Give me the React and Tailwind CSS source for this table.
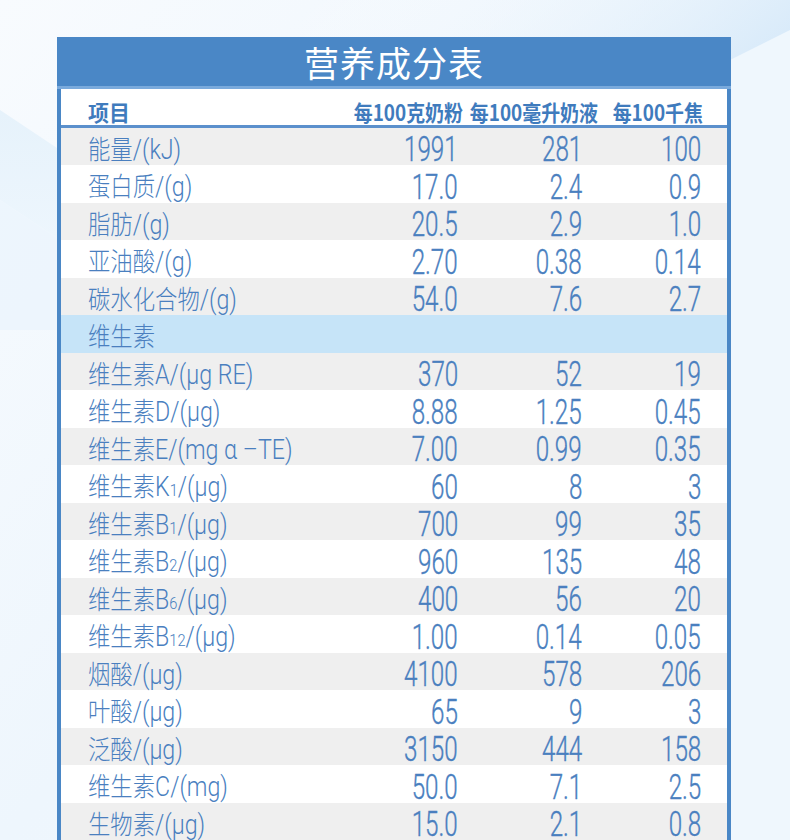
import React from "react";

const rows = [
  { c: "能量", u: "/(kJ)", v: ["1991", "281", "100"] },
  { c: "蛋白质", u: "/(g)", v: ["17.0", "2.4", "0.9"] },
  { c: "脂肪", u: "/(g)", v: ["20.5", "2.9", "1.0"] },
  { c: "亚油酸", u: "/(g)", v: ["2.70", "0.38", "0.14"] },
  { c: "碳水化合物", u: "/(g)", v: ["54.0", "7.6", "2.7"] },
  { c: "维生素", section: true },
  { c: "维生素", u: "A/(μg RE)", v: ["370", "52", "19"] },
  { c: "维生素", u: "D/(μg)", v: ["8.88", "1.25", "0.45"] },
  { c: "维生素", u: "E/(mg α –TE)", v: ["7.00", "0.99", "0.35"] },
  { c: "维生素", u: "K", s: "1", r: "/(μg)", v: ["60", "8", "3"] },
  { c: "维生素", u: "B", s: "1", r: "/(μg)", v: ["700", "99", "35"] },
  { c: "维生素", u: "B", s: "2", r: "/(μg)", v: ["960", "135", "48"] },
  { c: "维生素", u: "B", s: "6", r: "/(μg)", v: ["400", "56", "20"] },
  { c: "维生素", u: "B", s: "12", r: "/(μg)", v: ["1.00", "0.14", "0.05"] },
  { c: "烟酸", u: "/(μg)", v: ["4100", "578", "206"] },
  { c: "叶酸", u: "/(μg)", v: ["65", "9", "3"] },
  { c: "泛酸", u: "/(μg)", v: ["3150", "444", "158"] },
  { c: "维生素", u: "C/(mg)", v: ["50.0", "7.1", "2.5"] },
  { c: "生物素", u: "/(μg)", v: ["15.0", "2.1", "0.8"] },
];

function Num({ children, w }) {
  return (
    <div className={`${w} flex justify-end`}>
      <span className="inline-block origin-right scale-x-[0.69] text-[35px] leading-none font-light [-webkit-text-stroke:0.4px_#4a7fbf] font-['Roboto','Liberation_Sans',sans-serif]">
        {children}
      </span>
    </div>
  );
}

function Head({ children, w }) {
  return (
    <div className={`${w} flex justify-end`}>
      <span className="inline-block origin-right scale-x-[0.86] whitespace-nowrap">{children}</span>
    </div>
  );
}

export default function App() {
  return (
    <div className="relative w-[790px] h-[840px] overflow-hidden bg-gradient-to-br from-[#f8fbfe] via-[#eef6fd] to-[#f3f9fe]">
      <svg className="absolute inset-0" width="790" height="840" viewBox="0 0 790 840">
        <defs>
          <linearGradient id="tr" x1="0" y1="0" x2="1" y2="0.3">
            <stop offset="0" stopColor="#ffffff" stopOpacity="0" />
            <stop offset="1" stopColor="#d6e9f9" stopOpacity="0.9" />
          </linearGradient>
          <linearGradient id="lb" x1="0" y1="0" x2="0" y2="1">
            <stop offset="0" stopColor="#e6f2fb" />
            <stop offset="1" stopColor="#edf6fd" />
          </linearGradient>
        </defs>
        <rect x="300" y="0" width="490" height="120" fill="url(#tr)" />
        <polygon points="0,110 60,150 60,240 0,200" fill="url(#lb)" />
        <polygon points="0,200 60,240 60,330 0,330" fill="#eaf4fc" opacity="0.7" />
        <polygon points="730,60 790,30 790,840 730,840" fill="#eff7fd" />
      </svg>

      <div className="relative ml-[57px] mt-[37px] w-[674px] h-[803px] bg-[#4a87c6] flex flex-col">
        <div className="h-[52px] flex items-center justify-center text-white text-[35px] leading-none font-['Noto_Sans_CJK_SC',sans-serif] tracking-[1px]">
          营养成分表
        </div>
        <div className="h-[3px] bg-[#7aaadc]" />
        <div className="flex-1 mx-[4px] bg-white flex flex-col text-[#4a7fbf]">
          <div className="h-[39px] shrink-0 border-b-[3px] border-[#5b90cc] flex items-end pb-[3px] font-bold text-[22px] leading-none text-[#3f7bbd] font-['Noto_Sans_CJK_SC',sans-serif]">
            <div className="pl-[27px] flex-1">
              <span className="inline-block origin-left scale-x-[0.95]">项目</span>
            </div>
            <Head w="w-[140px]">每100克奶粉</Head>
            <Head w="w-[135px]">每100毫升奶液</Head>
            <Head w="w-[105px]">每100千焦</Head>
            <div className="w-[24px]" />
          </div>
          {rows.map((r, i) => (
            <div
              key={i}
              className={`h-[37.5px] shrink-0 flex items-center pt-[7px] ${
                r.section ? "bg-[#c6e4f8]" : i % 2 === 0 ? "bg-[#efefef]" : "bg-white"
              }`}
            >
              <div className="flex-1 pl-[27px] whitespace-nowrap">
                <span className="inline-flex items-baseline origin-left scale-x-[0.86] font-['Roboto','Liberation_Sans','Noto_Sans_CJK_SC',sans-serif] font-light">
                  <span className="text-[26px] leading-none font-['Noto_Sans_CJK_SC',sans-serif]">{r.c}</span>
                  {r.u && <span className="text-[27px] leading-none">{r.u}</span>}
                  {r.s && <span className="text-[17px] leading-none">{r.s}</span>}
                  {r.r && <span className="text-[27px] leading-none">{r.r}</span>}
                </span>
              </div>
              {!r.section && (
                <>
                  <Num w="w-[118px]">{r.v[0]}</Num>
                  <Num w="w-[124px]">{r.v[1]}</Num>
                  <Num w="w-[119px]">{r.v[2]}</Num>
                  <div className="w-[26px]" />
                </>
              )}
            </div>
          ))}
        </div>
      </div>
    </div>
  );
}
